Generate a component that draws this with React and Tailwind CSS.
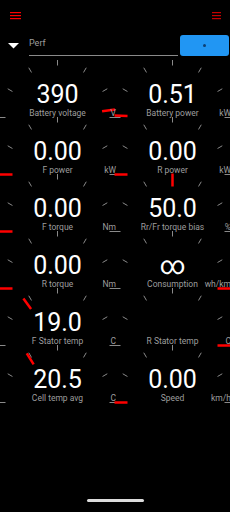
const GAUGES = [
  { value: '390', label: 'Battery voltage', unit: 'V', angle: 8 },
  { value: '0.51', label: 'Battery power', unit: 'kW', angle: 178 },
  { value: '0.00', label: 'F power', unit: 'kW', angle: 180 },
  { value: '0.00', label: 'R power', unit: 'kW', angle: 180 },
  { value: '0.00', label: 'F torque', unit: 'Nm', angle: 180 },
  { value: '50.0', label: 'Rr/Fr torque bias', unit: '%', angle: 90 },
  { value: '0.00', label: 'R torque', unit: 'Nm', angle: 180 },
  { value: '∞', label: 'Consumption', unit: 'wh/km', angle: 0 },
  { value: '19.0', label: 'F Stator temp', unit: 'C', angle: 126 },
  { value: '', label: 'R Stator temp', unit: 'C', angle: 0 },
  { value: '20.5', label: 'Cell temp avg', unit: 'C', angle: 122 },
  { value: '0.00', label: 'Speed', unit: 'km/h', angle: 180 },
]

const CX = 57.5
const CY = 57.5

function polar(r, deg) {
  const a = (deg * Math.PI) / 180
  return [CX + r * Math.cos(a), CY - r * Math.sin(a)]
}

// Semicircle dial: ticks every 30 degrees plus the red needle
function Dial({ angle }) {
  const ticks = [0, 30, 60, 90, 120, 150, 180]
  const [nx1, ny1] = polar(45, angle)
  const [nx2, ny2] = polar(58, angle)
  return (
    <svg className="absolute inset-0 overflow-visible pointer-events-none" width="115" height="57" viewBox="0 0 115 57">
      {ticks.map(t => {
        const [x1, y1] = polar(52, t)
        const [x2, y2] = polar(57.5, t)
        return <line key={t} x1={x1} y1={y1} x2={x2} y2={y2} stroke="#8a8a8a" strokeWidth="1" />
      })}
      <line x1={nx1} y1={ny1} x2={nx2} y2={ny2} stroke="#ff0000" strokeWidth="2.5" />
    </svg>
  )
}

function Gauge({ value, label, unit, angle }) {
  return (
    <div className="relative w-[115px] h-[57px] flex flex-col items-center pt-[21px]">
      <Dial angle={angle} />
      <div className="relative text-[25px] leading-[28px] h-[28px] text-white">{value}</div>
      <div className="relative text-[8.5px] leading-[8px] h-[8px] text-[#9e9e9e] whitespace-nowrap">{label}</div>
      <div className="absolute top-[49px] -right-[1px] text-[8.5px] leading-[8px] text-[#9e9e9e] whitespace-nowrap">{unit}</div>
    </div>
  )
}

function Burger({ width, color }) {
  return (
    <svg width={width} height="8" viewBox={`0 0 ${width} 8`}>
      <line x1="0" y1="0.6" x2={width} y2="0.6" stroke={color} strokeWidth="1.2" />
      <line x1="0" y1="3.6" x2={width} y2="3.6" stroke={color} strokeWidth="1.2" />
      <line x1="0" y1="6.6" x2={width} y2="6.6" stroke={color} strokeWidth="1.2" />
    </svg>
  )
}

export default function App() {
  return (
    <div
      className="w-[230px] h-[512px] bg-black overflow-hidden flex flex-col"
      style={{ fontFamily: 'Roboto, "Noto Sans", sans-serif' }}
    >
      {/* Top bar */}
      <div className="h-[31px] flex justify-between items-start pt-[12px] pl-[10px] pr-[9px]">
        <Burger width={11} color="#ff0000" />
        <Burger width={9} color="#c40000" />
      </div>

      {/* Profile selector */}
      <div className="h-[29px] flex items-start pt-[4px] pl-[8px]">
        <svg className="mt-[8px]" width="11" height="6" viewBox="0 0 11 6">
          <polygon points="0,0 11,0 5.5,5.5" fill="#ffffff" />
        </svg>
        <div className="ml-[10px] w-[149px] h-[21px] border-b border-[#8a8a8a] pt-[2.5px] text-[9px] leading-[11px] text-[#9e9e9e]">
          Perf
        </div>
        <button className="ml-[2px] w-[49px] h-[21px] rounded-[3px] bg-[#2196f3] flex items-center justify-center">
          <span className="block w-[3px] h-[3px] rounded-full bg-[#0d3f73]" />
        </button>
      </div>

      {/* Gauges */}
      <div className="grid grid-cols-2 w-[230px]">
        {GAUGES.map((g, i) => (
          <Gauge key={i} {...g} />
        ))}
      </div>

      {/* Home indicator */}
      <div className="mt-auto pb-[10px] flex justify-center">
        <div className="w-[57px] h-[3px] rounded-full bg-[#dcdcdc]" />
      </div>
    </div>
  )
}
